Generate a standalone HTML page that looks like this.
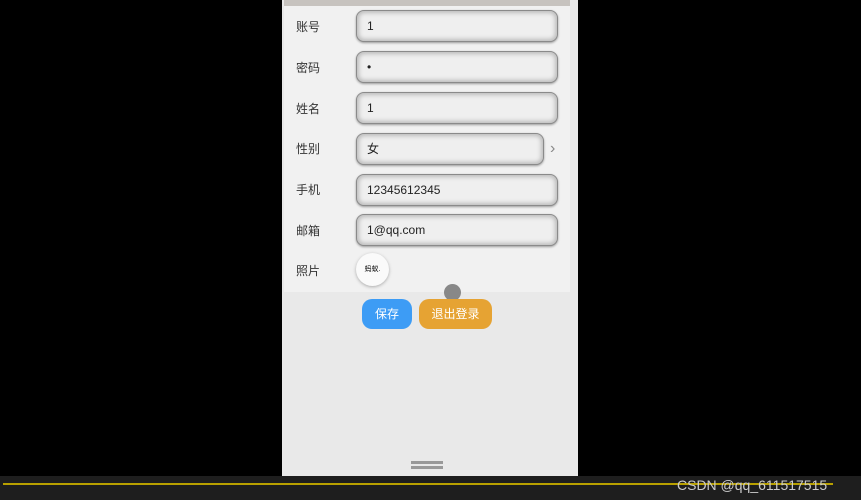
<!DOCTYPE html><html><head><meta charset="utf-8"><style>
body{margin:0;width:861px;height:500px;background:#000;position:relative;overflow:hidden;font-family:"Liberation Sans","Noto Sans CJK SC",sans-serif}
.ph{position:absolute;left:282px;top:0;width:296px;height:476px;background:#e9e9e9}
.top{position:absolute;left:2px;top:0;width:286px;height:6px;background:#c7c3bf}
.panel{position:absolute;left:2px;top:6px;width:286px;height:286px;background:#f1f1f1}
.lb{position:absolute;left:12px;font-size:12px;color:#333}
.in{position:absolute;left:72px;border:1px solid #8a8a8a;border-radius:8px;background:#efefef;box-shadow:inset 0 0 4px 2px #bbb,0 1px 2px #999;font-size:12px;color:#222;line-height:30px;padding-left:10px;box-sizing:border-box;width:202px;height:32px}
.btn{position:absolute;top:299px;height:30px;border-radius:10px;color:#fff;font-size:12px;text-align:center;line-height:30px}
</style></head><body>
<div class="ph">
<div class="top"></div>
<div class="panel">
<div class="lb" style="top:12px">账号</div><div class="in" style="top:4px">1</div>
<div class="lb" style="top:53px">密码</div><div class="in" style="top:45px">•</div>
<div class="lb" style="top:94px">姓名</div><div class="in" style="top:86px">1</div>
<div class="lb" style="top:134px">性别</div><div class="in" style="top:127px;width:188px">女</div>
<div style="position:absolute;left:266px;top:134px;color:#888;font-size:16px">›</div>
<div class="lb" style="top:175px">手机</div><div class="in" style="top:168px">12345612345</div>
<div class="lb" style="top:216px">邮箱</div><div class="in" style="top:208px">1@qq.com</div>
<div class="lb" style="top:256px">照片</div>
<div style="position:absolute;left:72px;top:247px;width:33px;height:33px;border-radius:50%;background:#fafafa;box-shadow:0 1px 3px #aaa;font-size:7px;line-height:33px;text-align:center">蚂蚁.</div>
</div>
<div style="position:absolute;left:162px;top:284px;width:17px;height:17px;border-radius:50%;background:#888"></div>
<div class="btn" style="left:80px;width:50px;background:#3d9cf5">保存</div>
<div class="btn" style="left:137px;width:73px;background:#e6a333">退出登录</div>
<div style="position:absolute;left:129px;top:461px;width:32px;height:3px;background:#999;box-shadow:0 5px 0 #999"></div>
</div>
<div style="position:absolute;left:0;top:476px;width:861px;height:24px;background:#1e1e1e"></div>
<div style="position:absolute;left:3px;top:483px;width:830px;height:2px;background:#b8a000"></div>
<div style="position:absolute;left:677px;top:477px;font-size:14px;color:#ccc">CSDN @qq_611517515</div>
</body></html>
